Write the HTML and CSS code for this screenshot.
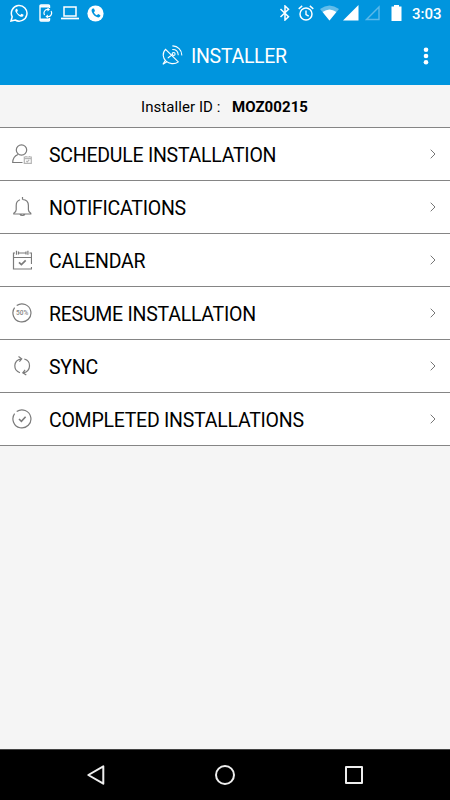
FILE: index.html
```html
<!DOCTYPE html>
<html lang="en">
<head>
<meta charset="utf-8">
<title>Installer</title>
<link rel="stylesheet" href="styles.css">
</head>
<body>
<div class="screen">
  <header class="top">
    <div class="status">
      <div class="status-left">
        <svg width="18" height="18" viewBox="0 0 18 18"><path d="M1 17l1.2-4.2A7.8 7.8 0 1 1 5.2 16Z" fill="none" stroke="#fff" stroke-width="1.5"/><path d="M6.3 4.7c-1.3.8-1.3 2.3-.3 3.9 1.200 2 2.600 3.300 4.700 4.100 1.500.5 2.800-.3 2.900-1.900l-2.100-1.100-1.200 1.300C8.700 10.400 7.600 9.300 7 8l.9-1.200-.8-2Z" fill="#fff"/></svg>
        <svg class="phone" width="14" height="18" viewBox="0 0 14 18"><path d="M10.500 4V2Q10.500 1 9.500 1H2Q1 1 1 2v14q0 1 1 1h7.500q1 0 1-1v-2" fill="none" stroke="#fff" stroke-width="1.400"/><path d="M1 2.300h9.500M1 15.700h9.500" stroke="#fff" stroke-width="2.200"/><path d="M9.300 5.500A3.600 3.600 0 0 0 5.600 11M8.200 12.500A3.600 3.600 0 0 0 12 7" fill="none" stroke="#fff" stroke-width="1.200"/><path d="M8.500 3.500l2.500 2-2.500 2zM8.900 10.500l-2.500 2 2.500 2z" fill="#fff"/></svg>
        <svg class="laptop" width="18" height="14" viewBox="0 0 18 14"><path d="M3 1h12v9H3Z" fill="none" stroke="#fff" stroke-width="1.500"/><path d="M0 12.500h18" stroke="#fff" stroke-width="1.700"/></svg>
        <svg class="call" width="17" height="17" viewBox="0 0 17 17"><circle cx="8.500" cy="8.500" r="8.100" fill="#fff"/><path d="M5.700 3.600c-1.500.9-1.400 2.700-.3 4.400 1.300 2.100 2.700 3.500 5 4.300 1.500.5 2.900-.3 3-2L11.200 9.100 9.800 10.200C8.400 9.400 7.500 8.500 6.900 7.200L8 6 7 3.600Z" fill="#0095de"/></svg>
      </div>
      <div class="status-right">
        <svg width="12" height="16" viewBox="0 0 12 16"><path d="M1.500 4l8 7.800L6 15V1l3.500 3.200-8 7.800" fill="none" stroke="#fff" stroke-width="1.500"/></svg>
        <svg class="alarm" width="16" height="16" viewBox="0 0 16 16"><circle cx="8" cy="9" r="6" fill="none" stroke="#fff" stroke-width="1.500"/><path d="M.7 3.900l3.500-3M15.300 3.900l-3.500-3M8 5.500v4l2.700 1.700" fill="none" stroke="#fff" stroke-width="1.400"/></svg>
        <svg class="wifi" width="19" height="16" viewBox="0 0 19 16"><path d="M0 4Q9.500-3 19 4L9.500 15.500Z" fill="#62bdea"/><path d="M2.600 7Q9.500 2 16.400 7L9.500 15.500Z" fill="#fff"/></svg>
        <svg class="signal" width="16" height="16" viewBox="0 0 16 16"><path d="M15.500 0v15.500H0Z" fill="#fff"/></svg>
        <svg class="signal2" width="16" height="16" viewBox="0 0 16 16"><path d="M14 2v12.500H1.500Z" fill="none" stroke="#5bb9e9" stroke-width="1.400"/></svg>
        <svg class="battery" width="11" height="16" viewBox="0 0 11 16"><path d="M.5 1.500h2.500V0h5v1.500h2.500V16H.5Z" fill="#fff"/></svg>
        <span class="time">3:03</span>
      </div>
    </div>
    <div class="bar">
      <svg class="dish" width="21" height="21" viewBox="0 0 21 21" fill="none" stroke="#fff" stroke-width="1.100" stroke-linecap="round"><path d="M3.500 4.300C-.2 8 1 13.500 4 16.200s8.600 3.500 12.300.7L3.500 4.300ZM6.200 12.800l4.700-3.700M3.200 15.500l-2.300 3.700 4-2.400"/><circle cx="11.600" cy="9" r="1.500"/><path d="M10.700 4.500c3.200 0 5.300 2 5.500 5.300M10.800.9c5 .2 8.800 4 9 9"/></svg>
      <h1>INSTALLER</h1>
      <svg class="more" width="6" height="18" viewBox="0 0 6 18" fill="#fff"><circle cx="3" cy="2.700" r="2.300"/><circle cx="3" cy="9" r="2.300"/><circle cx="3" cy="15.300" r="2.300"/></svg>
    </div>
  </header>
  <div class="ident"><span class="ident-label">Installer ID :</span><b>MOZ00215</b></div>
  <main class="menu">
    <div class="row">
      <svg class="icon" viewBox="0 0 20 20"><circle cx="9.500" cy="6" r="5.200"/><path d="M6 10.500C2.300 12 .8 14.500.7 18.500h9.800"/><g class="faint"><path d="M12.300 13h7v6.300h-7ZM12.300 14.600h7M14 12v1.500M17.600 12v1.500M14.200 16.800l1 1 2-2"/></g></svg>
      <span class="name">SCHEDULE INSTALLATION</span>
      <svg class="chev" viewBox="0 0 6 10"><path d="M.7.7 5 5 .7 9.300"/></svg>
    </div>
    <div class="row">
      <svg class="icon" viewBox="0 0 20 20"><path d="M10.500 0v2.500M8 2.800C5.500 3.600 4.200 5.700 4.200 8.500v4.200c0 1.800-.8 2.500-2.400 3.600v.7h17v-.7c-1.600-1.100-2.400-1.800-2.400-3.600V8.500c0-3.500-2.200-5.800-5.900-6M8 17.300c.6 1.600 4.200 1.600 4.800 0"/></svg>
      <span class="name">NOTIFICATIONS</span>
      <svg class="chev" viewBox="0 0 6 10"><path d="M.7.7 5 5 .7 9.300"/></svg>
    </div>
    <div class="row">
      <svg class="icon" viewBox="0 0 20 20"><path d="M3 3H1.500v16H19.500v-2M19.500 14V3H17.500M6.500 3h7.500M1.500 7.500h18M4.500.7v4M15.900.7v4M6.500 1.500v3M14 1.500v3"/><path d="M7 12.300l2.400 2.300 4.300-4.200" stroke-width="1.700"/></svg>
      <span class="name">CALENDAR</span>
      <svg class="chev" viewBox="0 0 6 10"><path d="M.7.7 5 5 .7 9.300"/></svg>
    </div>
    <div class="row">
      <svg class="icon" viewBox="0 0 20 20"><path d="M4.700 2.600A9 9 0 1 1 2.600 4.700"/><text x="10.200" y="12.300" class="pct">50%</text></svg>
      <span class="name">RESUME INSTALLATION</span>
      <svg class="chev" viewBox="0 0 6 10"><path d="M.7.7 5 5 .7 9.300"/></svg>
    </div>
    <div class="row">
      <svg class="icon" viewBox="0 0 20 20"><path d="M8 16.700C1 14.500.8 4.500 9.200 2.800M6.500.6l3.200 2.200-2.300 2.900M12.300 3C19.500 5 19.300 15 11.500 16.800M14.300 18.900l-3.500-2.100 2.300-3"/></svg>
      <span class="name">SYNC</span>
      <svg class="chev" viewBox="0 0 6 10"><path d="M.7.7 5 5 .7 9.300"/></svg>
    </div>
    <div class="row">
      <svg class="icon" viewBox="0 0 20 20"><path d="M4.700 2.600A9 9 0 1 1 2.600 4.700"/><path d="M7 10l2.400 2.300 4.200-4.500" stroke-width="1.600"/></svg>
      <span class="name">COMPLETED INSTALLATIONS</span>
      <svg class="chev" viewBox="0 0 6 10"><path d="M.7.7 5 5 .7 9.300"/></svg>
    </div>
  </main>
  <nav class="nav">
    <svg width="20" height="22" viewBox="0 0 20 22"><path d="M17.300 2.300v17.400L2.300 11Z"/></svg>
    <svg width="22" height="22" viewBox="0 0 22 22"><circle cx="11" cy="11" r="9"/></svg>
    <svg width="20" height="20" viewBox="0 0 20 20"><path d="M2 2h16v16H2Z"/></svg>
  </nav>
</div>
</body>
</html>
```

FILE: styles.css
```css
* { box-sizing: border-box; }
body { margin: 0; font-family: Roboto, "Liberation Sans", sans-serif; color: #000; }
svg { display: block; flex: none; }
.screen { width: 450px; height: 800px; display: flex; flex-direction: column; background: #f5f5f5; }
.top { height: 85px; background: #0095de; color: #fff; }
.status { height: 26px; display: flex; justify-content: space-between; padding: 0 9px 0 10px; }
.status-left, .status-right { display: flex; align-items: center; }
.phone { margin-left: 11px; }
.laptop { margin-left: 8px; }
.call { margin-left: 8px; }
.alarm { margin-left: 7px; }
.wifi { margin-left: 6px; }
.signal { margin-left: 4px; }
.signal2 { margin-left: 6px; }
.battery { margin-left: 10px; }
.time { margin-left: 10px; width: 29px; font-size: 15px; font-weight: 500; line-height: 26px; padding-top: 1px; white-space: nowrap; }
.bar { height: 59px; display: flex; align-items: center; padding: 0 21px 0 162px; }
.bar h1 { margin: 0 0 0 8px; font-size: 19.5px; letter-spacing: -0.3px; font-weight: 400; line-height: 24px; padding-top: 3px; }
.more { margin-left: auto; }
.ident { height: 43px; display: flex; align-items: center; padding: 2px 0 0 141px; border-bottom: 1px solid #858585; font-size: 15px; letter-spacing: 0.07px; white-space: pre; }
.ident-label { width: 91px; }
.menu { background: #fff; }
.row { height: 53px; display: flex; align-items: center; padding: 0 14px 0 12px; border-bottom: 1px solid #858585; }
.icon { width: 20px; height: 20px; fill: none; stroke: #7b7b7b; stroke-width: 1.2; }
.faint { stroke: #b5b5b5; }
.pct { font-size: 6.500px; font-weight: 500; text-anchor: middle; fill: #858585; stroke: none; }
.name { margin-left: 17px; font-size: 19.5px; letter-spacing: -0.25px; line-height: 24px; padding-top: 4px; white-space: nowrap; }
.chev { width: 6px; height: 10px; margin-left: auto; fill: none; stroke: #777; stroke-width: 1; }
.nav { margin-top: auto; height: 51px; background: #000; border-top: 1px solid #444; display: flex; align-items: center; justify-content: space-between; padding: 0 86px; }
.nav svg { fill: none; stroke: #eee; stroke-width: 2; stroke-linejoin: round; }
```
